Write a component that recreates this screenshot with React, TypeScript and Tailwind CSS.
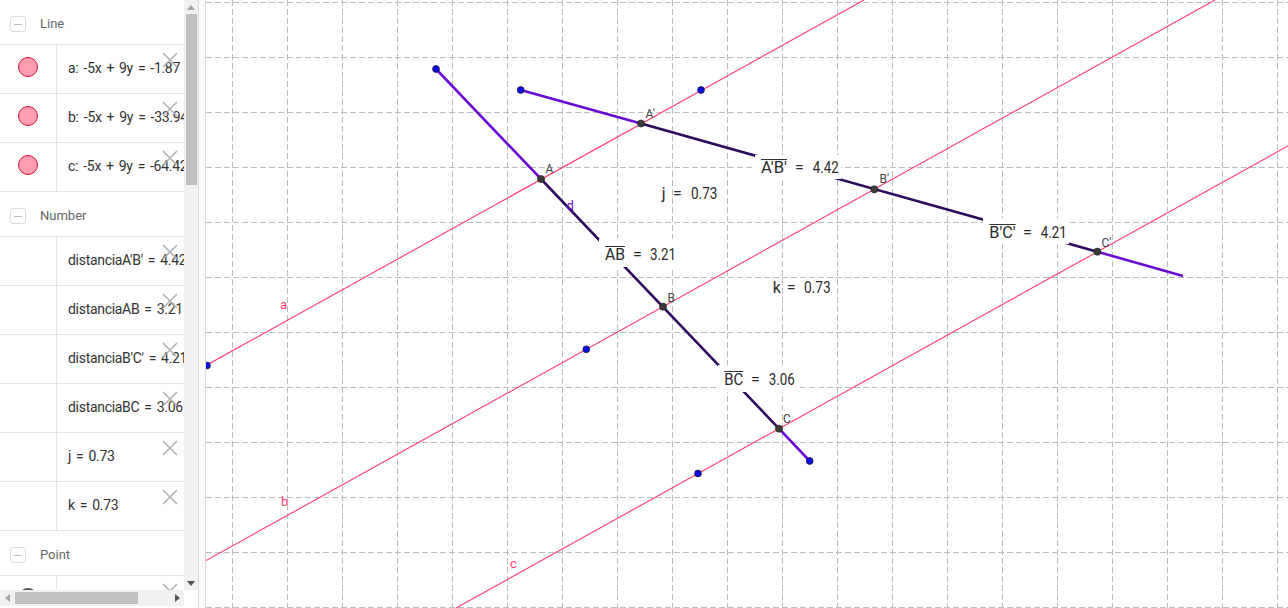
import type { ReactNode } from "react";

type Marker = "line" | "point" | "none";

type Item = {
  marker: Marker;
  text: string;
};

const lineItems: Item[] = [
  { marker: "line", text: "a: -5x + 9y = -1.87" },
  { marker: "line", text: "b: -5x + 9y = -33.94" },
  { marker: "line", text: "c: -5x + 9y = -64.42" },
];

const numberItems: Item[] = [
  { marker: "none", text: "distanciaA'B' = 4.42" },
  { marker: "none", text: "distanciaAB = 3.21" },
  { marker: "none", text: "distanciaB'C' = 4.21" },
  { marker: "none", text: "distanciaBC = 3.06" },
  { marker: "none", text: "j = 0.73" },
  { marker: "none", text: "k = 0.73" },
];

function SectionHeader({ title }: { title: string }) {
  return (
    <div className="flex h-[45px] shrink-0 items-center gap-[14px] border-b border-[#e3e3e3] pl-[10px] pt-[4px]">
      <span className="flex h-4 w-4 items-center justify-center rounded-[3px] border border-[#dddddd]">
        <span className="h-px w-2 bg-[#bbbbbb]" />
      </span>
      <span className="text-[13px] text-[#666666]">{title}</span>
    </div>
  );
}

function DeleteIcon() {
  return (
    <svg className="absolute left-[162px] top-[7px] h-4 w-4" viewBox="0 0 16 16" aria-hidden="true">
      <path d="M1 1 L15 15 M15 1 L1 15" stroke="#b4b4b4" strokeWidth="1.6" fill="none" />
    </svg>
  );
}

// operators get a little extra room, like the math renderer does
function MathText({ text }: { text: string }) {
  const parts = text.split(/ ([+=]) /);
  return (
    <>
      {parts.map((part, index) =>
        index % 2 === 1 ? (
          <span className="px-[5px]" key={index}>
            {part}
          </span>
        ) : (
          <span className="[word-spacing:2px]" key={index}>
            {part}
          </span>
        ),
      )}
    </>
  );
}

function ItemRow({ item }: { item: Item }) {
  return (
    <div className="relative flex h-[49px] shrink-0 border-b border-[#e3e3e3]">
      <div className="flex w-[57px] shrink-0 justify-center border-r border-[#e3e3e3] pt-[12px]">
        {item.marker === "line" ? (
          <span className="h-5 w-5 rounded-full border border-[#d3123f] bg-[#ff9db1]" />
        ) : null}
        {item.marker === "point" ? (
          <span className="h-5 w-5 rounded-full border-2 border-[#555555] bg-white" />
        ) : null}
      </div>
      <div className="flex min-w-0 flex-1 items-center overflow-hidden whitespace-nowrap pb-[2px] pl-[11px] text-[14px] tracking-[-0.3px] text-[#333333]">
        <MathText text={item.text} />
      </div>
      <DeleteIcon />
    </div>
  );
}

function AlgebraPanel() {
  return (
    <aside className="flex h-full w-[198px] shrink-0 flex-col bg-white">
      <div className="flex h-[590px]">
        <div className="flex w-[184px] flex-col overflow-hidden">
          <SectionHeader title="Line" />
          {lineItems.map((item) => (
            <ItemRow item={item} key={item.text} />
          ))}
          <SectionHeader title="Number" />
          {numberItems.map((item) => (
            <ItemRow item={item} key={item.text} />
          ))}
          <SectionHeader title="Point" />
          <ItemRow item={{ marker: "point", text: "" }} />
        </div>
        <div className="flex w-[14px] flex-col bg-[#f1f1f1]">
          <div className="flex h-[14px] items-center justify-center">
            <span className="h-0 w-0 border-x-[4px] border-b-[5px] border-x-transparent border-b-[#a6a6a6]" />
          </div>
          <div className="ml-[2px] h-[171px] w-[11px] bg-[#c1c1c1]" />
          <div className="flex-1" />
          <div className="flex h-[14px] items-center justify-center">
            <span className="h-0 w-0 border-x-[4px] border-t-[5px] border-x-transparent border-t-[#505050]" />
          </div>
        </div>
      </div>
      <div className="flex h-[18px]">
        <div className="flex h-[16px] w-[184px] items-center bg-[#f1f1f1]">
          <div className="flex w-[15px] justify-center">
            <span className="h-0 w-0 border-y-[4px] border-r-[5px] border-y-transparent border-r-[#a6a6a6]" />
          </div>
          <div className="h-[12px] w-[123px] bg-[#c1c1c1]" />
          <div className="flex-1" />
          <div className="flex w-[14px] justify-center">
            <span className="h-0 w-0 border-y-[4px] border-l-[5px] border-y-transparent border-l-[#505050]" />
          </div>
        </div>
        <div className="flex-1 bg-white" />
      </div>
    </aside>
  );
}

const gridX = Array.from({ length: 20 }, (_, k) => 232.5 + 55 * k);
const gridY = Array.from({ length: 12 }, (_, k) => 2.5 + 55 * k);

const PURPLE = "#6a0bd4";
const DARK = "#2d0a5c";
const PINK = "#ff3d6e";

const darkPoints: [number, number][] = [
  [541, 179],
  [641, 123.5],
  [874.3, 189.3],
  [1097.3, 251.7],
  [663, 306.7],
  [779, 428.7],
];

const freePoints: [number, number][] = [
  [436, 69],
  [520.7, 90],
  [701, 90],
  [586.3, 349.3],
  [698, 473.5],
  [809.7, 461],
  [207, 365.5],
];

const pointLabels: { x: number; y: number; t: string }[] = [
  { x: 545.5, y: 173, t: "A" },
  { x: 645.5, y: 118, t: "A'" },
  { x: 879.5, y: 183, t: "B'" },
  { x: 1101.5, y: 247, t: "C'" },
  { x: 667.5, y: 302, t: "B" },
  { x: 783, y: 423, t: "C" },
];

type MeasureLabel = {
  box: [number, number, number, number];
  name: string;
  nameX: number;
  nameW: number;
  barY: number;
  eqX: number;
  value: string;
  valueX: number;
  baseline: number;
};

const measures: MeasureLabel[] = [
  { box: [599, 239, 81, 28], name: "AB", nameX: 605, nameW: 20, barY: 246.5, eqX: 633, value: "3.21", valueX: 650, baseline: 260 },
  { box: [755, 155, 86, 24], name: "A′B′", nameX: 761, nameW: 26, barY: 159.5, eqX: 795, value: "4.42", valueX: 812.7, baseline: 173 },
  { box: [983, 218, 86, 26], name: "B′C′", nameX: 989.3, nameW: 26.4, barY: 224.5, eqX: 1023, value: "4.21", valueX: 1040.7, baseline: 238 },
  { box: [718, 365, 80, 27], name: "BC", nameX: 724.3, nameW: 19, barY: 371.5, eqX: 751, value: "3.06", valueX: 768.7, baseline: 385 },
];

function Label({ x, y, size, fill, children, length }: { x: number; y: number; size: number; fill: string; children: ReactNode; length?: number }) {
  return (
    <text
      x={x}
      y={y}
      fontSize={size}
      fill={fill}
      textLength={length}
      lengthAdjust={length ? "spacingAndGlyphs" : undefined}
    >
      {children}
    </text>
  );
}

function GraphicsView() {
  return (
    <svg className="block h-[608px] w-[1082px] shrink-0" viewBox="206 0 1082 608">
      <rect x="206" y="0" width="1082" height="608" fill="#ffffff" />
      <g stroke="#bdbdbd" strokeWidth="1" strokeDasharray="6 3">
        {gridX.map((x) => (
          <line key={`gx${x}`} x1={x} y1="0" x2={x} y2="608" />
        ))}
        {gridY.map((y) => (
          <line key={`gy${y}`} x1="206" y1={y} x2="1288" y2={y} />
        ))}
      </g>

      <g stroke={PINK} strokeWidth="1.1">
        <line x1="206" y1="365.5" x2="864" y2="0" />
        <line x1="206" y1="560.6" x2="1215" y2="0" />
        <line x1="456" y1="608" x2="1288" y2="145.9" />
      </g>

      <g strokeWidth="2.6" strokeLinecap="butt">
        <line x1="436" y1="69" x2="541" y2="179" stroke={PURPLE} />
        <line x1="541" y1="179" x2="779" y2="428.7" stroke={DARK} />
        <line x1="779" y1="428.7" x2="809.7" y2="461" stroke={PURPLE} />
        <line x1="520.7" y1="90" x2="641" y2="123.5" stroke={PURPLE} />
        <line x1="641" y1="123.5" x2="1097.3" y2="251.7" stroke={DARK} />
        <line x1="1097.3" y1="251.7" x2="1183" y2="276" stroke={PURPLE} />
      </g>

      {measures.map((m) => (
        <g key={m.name}>
          <rect x={m.box[0]} y={m.box[1]} width={m.box[2]} height={m.box[3]} fill="#ffffff" />
          <line x1={m.nameX} y1={m.barY} x2={m.nameX + m.nameW} y2={m.barY} stroke="#333333" strokeWidth="1" />
          <Label x={m.nameX} y={m.baseline} size={16} fill="#2b2b2b" length={m.nameW}>
            {m.name}
          </Label>
          <Label x={m.eqX} y={m.baseline} size={16} fill="#2b2b2b">
            =
          </Label>
          <Label x={m.valueX} y={m.baseline} size={16} fill="#2b2b2b" length={26}>
            {m.value}
          </Label>
        </g>
      ))}

      <Label x={661.7} y={199} size={16} fill="#2b2b2b">
        j
      </Label>
      <Label x={673} y={199} size={16} fill="#2b2b2b">
        =
      </Label>
      <Label x={691} y={199} size={16} fill="#2b2b2b" length={26.3}>
        0.73
      </Label>
      <Label x={772.7} y={293} size={16} fill="#2b2b2b">
        k
      </Label>
      <Label x={786.7} y={293} size={16} fill="#2b2b2b">
        =
      </Label>
      <Label x={804} y={293} size={16} fill="#2b2b2b" length={26.7}>
        0.73
      </Label>

      <Label x={280} y={309} size={13} fill={PINK}>
        a
      </Label>
      <Label x={281} y={506} size={13} fill={PINK}>
        b
      </Label>
      <Label x={510} y={568} size={13} fill={PINK}>
        c
      </Label>
      <Label x={566.5} y={210} size={13} fill={PURPLE}>
        d
      </Label>

      {pointLabels.map((p) => (
        <Label key={p.t} x={p.x} y={p.y} size={12} fill="#444444">
          {p.t}
        </Label>
      ))}

      {darkPoints.map(([x, y]) => (
        <circle key={`d${x}`} cx={x} cy={y} r="3.6" fill="#3a3a3a" stroke="#222222" strokeWidth="0.6" />
      ))}
      {freePoints.map(([x, y]) => (
        <circle key={`f${x}`} cx={x} cy={y} r="3.4" fill="#0a0ae6" stroke="#1a1a3a" strokeWidth="0.8" />
      ))}
    </svg>
  );
}

export default function App() {
  return (
    <div className="flex h-[608px] w-[1288px] overflow-hidden bg-white [font-family:'Liberation_Sans_Narrow','Arial_Narrow',Roboto,sans-serif]">
      <AlgebraPanel />
      <div className="w-px shrink-0 bg-[#dcdcdc]" />
      <div className="w-[6px] shrink-0 bg-[#fbfbfb]" />
      <div className="w-px shrink-0 bg-[#dadada]" />
      <GraphicsView />
    </div>
  );
}
